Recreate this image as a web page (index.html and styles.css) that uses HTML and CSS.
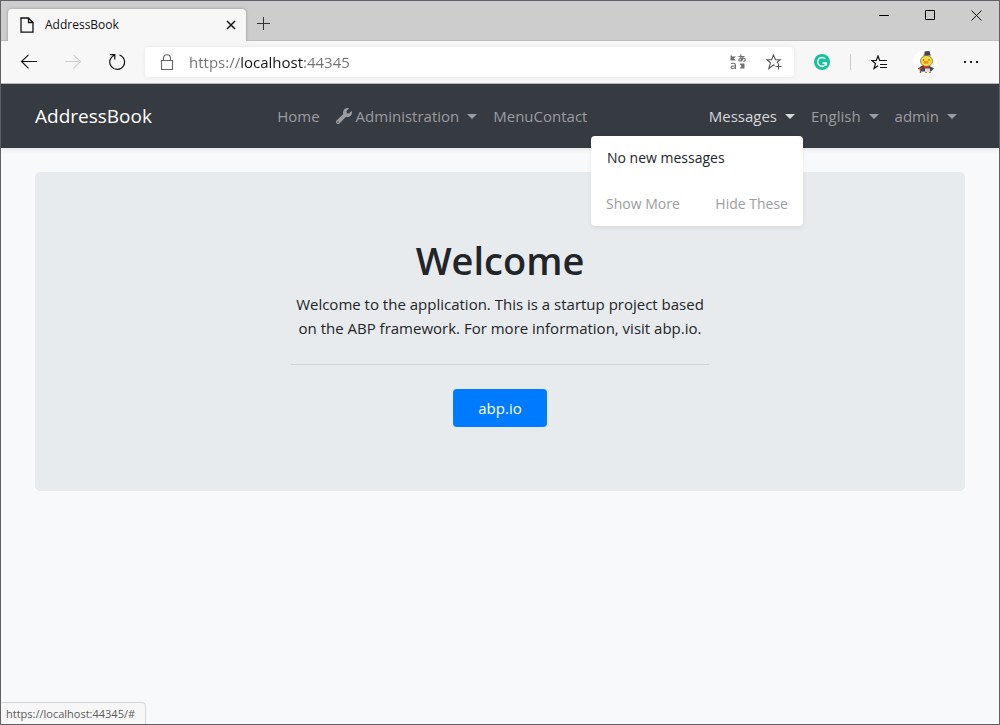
FILE: index.html
```html
<!DOCTYPE html>
<html lang="en">
<head>
<meta charset="utf-8">
<title>AddressBook</title>
<link rel="stylesheet" href="styles.css">
</head>
<body>
<div class="window">
  <div class="titlebar">
    <div class="tab">
      <svg class="tab-file" width="14" height="16" viewBox="0 0 14 16" fill="none" stroke="#111" stroke-width="1.3"><path d="M1 1h7.500L13 5.500V15.200H1zM8.500 1v4.500H13"/></svg>
      <span class="tab-title">AddressBook</span>
      <button class="icon-btn tab-close" aria-label="Close tab"><svg width="10" height="10" viewBox="0 0 10 10" stroke="#111" stroke-width="1.500"><path d="M1 1l8 8M9 1L1 9"/></svg></button>
    </div>
    <button class="icon-btn new-tab" aria-label="New tab"><svg width="14" height="14" viewBox="0 0 14 14" stroke="#333"><path d="M6.500 0v13M0 6.500h13"/></svg></button>
    <div class="window-controls">
      <button class="icon-btn control" aria-label="Minimize"><svg width="11" height="11" viewBox="0 0 11 11" stroke="#000"><path d="M0 5.500h10"/></svg></button>
      <button class="icon-btn control" aria-label="Maximize"><svg width="11" height="11" viewBox="0 0 11 11" stroke="#000" fill="none"><path d="M.5.5h9v9h-9z"/></svg></button>
      <button class="icon-btn control" aria-label="Close window"><svg width="11" height="11" viewBox="0 0 11 11" stroke="#111"><path d="M.5.5l10 10M10.500.5l-10 10"/></svg></button>
    </div>
  </div>

  <div class="toolbar">
    <div class="history">
      <button class="icon-btn" aria-label="Back"><svg width="18" height="16" viewBox="0 0 18 16" fill="none" stroke="#111" stroke-width="1.100"><path d="M17 7.500H1.500M8.500.8L1.500 7.500l7 6.900"/></svg></button>
      <button class="icon-btn" aria-label="Forward" disabled><svg width="18" height="16" viewBox="0 0 18 16" fill="none" stroke="#ccc" stroke-width="1.100"><path d="M1 7.500h15.500M9.500.8l7 6.700-7 6.900"/></svg></button>
      <button class="icon-btn" aria-label="Refresh"><svg width="18" height="18" viewBox="0 0 18 18" fill="none" stroke="#111" stroke-width="1.200"><path d="M11.500 2a7.400 7.400 0 1 1-5.200.2M2 1.600h4.800v4.800"/></svg></button>
    </div>
    <div class="address">
      <svg width="14" height="17" viewBox="0 0 14 17" fill="none" stroke="#666" stroke-width="1.100"><path d="M1.500 6.500h11v9h-11zM3.500 6.500V4.200a3.400 3.400 0 0 1 7 0v2.300"/></svg>
      <input class="url" type="text" aria-label="Address" value="https://localhost:44345">
      <button class="icon-btn" aria-label="Translate"><svg width="16" height="16" viewBox="0 0 16 16" fill="none" stroke="#707070" stroke-width="1.100"><path d="M.5 1.500h1.500v1H6L4 4.500l2 2H.5zM9.500 14.500h5v-5h-5l2 2.500z" fill="#707070" stroke="none"/><path d="M8.500 2.500h6M10.800.2c-.3 3 0 4.500.7 6.300M13.300 3.500c-.5 2-2 3.500-3.500 3.500s-1.500-2.300 1-2.800 4.500.2 4.500 1.500-1 1.700-2 1.800M1 10c1-1.200 4.500-1.200 4.500 1V15M5.500 12C3 11.800 1 12 1 13.400c0 1.700 3.500 1.500 4.500-.4"/></svg></button>
      <button class="icon-btn" aria-label="Add to favorites"><svg width="16" height="16" viewBox="0 0 16 16" fill="none" stroke="#555" stroke-width="1.100"><path d="M8.500 11.800L7.500 11l-4.700 3.500 1.700-5.700L.8 5.700h4.800L7.500 1l2 4.700h4.700l-3 2.400.3 1.200M12.500 9.500v6M9.500 12.500h6"/></svg></button>
    </div>
    <div class="extensions">
      <button class="icon-btn" aria-label="Writing assistant"><svg width="16" height="16" viewBox="0 0 16 16"><circle cx="8" cy="8" r="8" fill="#15c39a"/><path d="M11.200 4.800A4.400 4.400 0 1 0 12.300 9H8.500M12.300 9v2.500" fill="none" stroke="#fff" stroke-width="1.400"/></svg></button>
      <span class="divider"></span>
      <button class="icon-btn" aria-label="Favorites"><svg width="16" height="15" viewBox="0 0 16 15" fill="none" stroke="#111" stroke-width="1.200"><path d="M7 10.800L3 13.500l1.500-5L.8 5.500h4.500L7 1l1.700 4.500H16M9 9.500h7M9 12.500h7"/></svg></button>
      <button class="icon-btn" aria-label="Profile"><svg width="24" height="24" viewBox="0 0 24 24"><circle cx="12" cy="12" r="12" fill="#fff"/><path d="M6.500 17q6-4 12 0l2.500 1.500-3 3H7z" fill="#47464d"/><ellipse cx="13.500" cy="11" rx="6" ry="5.500" fill="#f4dc3b" stroke="#6b6040" stroke-width=".7"/><path d="M11.500 1.500q3-1.200 5.500 0V5h-5.500zM10.500 4.500h7.500v1h-7.500z" fill="#45454b"/><ellipse cx="13" cy="12.300" rx="2.600" ry="1.500" fill="#ee8b22"/><circle cx="10.500" cy="10" r=".7" fill="#554"/><circle cx="16" cy="10" r=".7" fill="#554"/><path d="M10.500 15.500l2.500 1.200 2.500-1.200v3L13 17.500l-2.500 1z" fill="#e52836"/><path d="M12 18.500h5V22h-5z" fill="#dedee2"/><path d="M5 18.500h4M7.500 18.500V23" stroke="#9b562d" stroke-width="1.400"/><path d="M12 22.500h2m2 0h2" stroke="#d58a37"/></svg></button>
      <button class="icon-btn" aria-label="Settings and more"><svg width="16" height="4" viewBox="0 0 16 4" fill="#222"><path d="M1 1h2v2H1zM7 1h2v2H7zM13 1h2v2h-2z"/></svg></button>
    </div>
  </div>

  <div class="page">
    <nav class="navbar">
      <a class="brand" href="#">AddressBook</a>
      <ul class="menu">
        <li><a class="nav-link" href="#">Home</a></li>
        <li><a class="nav-link caret" href="#"><svg class="wrench" width="16" height="16" viewBox="0 0 512 512" fill="currentColor"><path d="M507.700 109.100c-2.200-9-13.500-12.100-20.100-5.500l-74.400 74.400-67.900-11.300L334 98.900l74.400-74.400c6.600-6.600 3.400-17.900-5.700-20.200-47.400-11.700-99.600.9-136.600 37.900-39.600 39.600-50.500 97.100-34.100 147.200L18.700 402.800c-25 25-25 65.500 0 90.500s65.500 25 90.500 0l213.200-213.200c50.100 16.700 107.500 5.700 147.400-34.200 37.100-37.100 49.700-89.300 37.900-136.800zM64 472c-13.200 0-24-10.800-24-24 0-13.300 10.700-24 24-24s24 10.700 24 24c0 13.200-10.700 24-24 24z"/></svg>Administration</a></li>
        <li><a class="nav-link" href="#">MenuContact</a></li>
      </ul>
      <ul class="menu">
        <li class="dropdown">
          <a class="nav-link caret active" href="#" aria-expanded="true">Messages</a>
          <div class="dropdown-menu">
            <p class="notice">No new messages</p>
            <div class="actions"><a href="#">Show More</a><a href="#">Hide These</a></div>
          </div>
        </li>
        <li><a class="nav-link caret" href="#">English</a></li>
        <li><a class="nav-link caret" href="#">admin</a></li>
      </ul>
    </nav>
    <main class="container">
      <section class="jumbotron">
        <div class="welcome">
          <h1>Welcome</h1>
          <p>Welcome to the application. This is a startup project based on the ABP framework. For more information, visit abp.io.</p>
          <hr>
          <a class="button" href="#">abp.io</a>
        </div>
      </section>
    </main>
    <div class="status">https://localhost:44345/#</div>
  </div>
</div>
</body>
</html>
```
FILE: styles.css
```css
* { box-sizing: border-box; }
body {
  margin: 0;
  font-family: "Open Sans", "Noto Sans", sans-serif;
  font-size: 15px;
  line-height: 24px;
  color: #212529;
}
a { text-decoration: none; }
svg { display: block; flex: none; }
.window {
  display: flex;
  flex-direction: column;
  min-height: 100vh;
  border: 1px solid #606166;
  background: #f8f9fb;
}
.icon-btn {
  display: flex;
  align-items: center;
  justify-content: center;
  padding: 0;
  border: 0;
  background: none;
}
.titlebar {
  display: flex;
  align-items: flex-end;
  height: 40px;
  padding-left: 7px;
  background: #cdcdcd;
  border-bottom: 1px solid #bdbdbd;
}
.tab {
  display: flex;
  align-items: center;
  width: 238px;
  height: 32px;
  margin-bottom: -1px;
  padding: 0 10px 0 12px;
  border-radius: 4px 4px 0 0;
  background: #f7f7f7;
  box-shadow: 0 0 3px #0000004d;
  clip-path: inset(-4px -4px 0 -4px);
}
.tab-title { flex: 1; margin-left: 11px; font-size: 12px; color: #111; }
.new-tab { width: 36px; height: 32px; }
.window-controls { display: flex; align-self: flex-start; margin-left: auto; }
.control { width: 46px; height: 28px; }
.toolbar {
  display: flex;
  align-items: center;
  height: 43px;
  padding: 0 20px 0 19px;
  background: #f7f7f7;
  border-bottom: 1px solid #b8b8ba;
}
.history { display: flex; gap: 26px; }
.address {
  display: flex;
  flex: 1;
  align-items: center;
  gap: 20px;
  height: 30px;
  margin-left: 19px;
  padding: 0 12px 0 15px;
  border-radius: 4px;
  background: #fff;
  box-shadow: 0 0 4px #00000014;
}
.url {
  flex: 1;
  min-width: 0;
  margin-left: -5px;
  padding: 0;
  border: 0;
  font: 15px/24px "Open Sans", "Noto Sans", sans-serif;
  color: transparent;
  background: linear-gradient(90deg, #717171 51px, #171717 51px, #171717 114px, #717171 114px);
  -webkit-background-clip: text;
  background-clip: text;
}
.extensions { display: flex; align-items: center; margin-left: 20px; }
.divider { width: 1px; height: 16px; margin: 0 20px; background: #c8c8c8; }
.extensions .icon-btn + .icon-btn { margin-left: 26px; }
.page { position: relative; flex: 1; }
.navbar {
  display: flex;
  align-items: center;
  justify-content: space-between;
  padding: 12px 34px;
  background: #363a41;
  box-shadow: 0 2px 4px #00000013;
}
.brand { margin-right: 12px; font-size: 19px; color: #fff; }
.menu { display: flex; margin: 0; padding: 0; list-style: none; }
.nav-link { display: flex; align-items: center; padding: 8px; color: #9b9da0; }
.wrench { margin-right: 4px; }
.caret::after {
  content: "";
  margin-left: 8px;
  border: 5px solid transparent;
  border-top-color: currentColor;
  border-bottom: 0;
}
.nav-link.active { color: #d7d8d9; }
.dropdown { position: relative; }
.dropdown-menu {
  position: absolute;
  top: 100%;
  right: 0;
  width: 212px;
  padding: 10px 15px;
  border-radius: 4px;
  background: #fff;
  box-shadow: 0 2px 4px #00000013;
  font-size: 14px;
}
.notice { margin: 0 1px 22px; }
.actions { display: flex; justify-content: space-between; }
.actions a { color: #9b9da0; }
.container { padding: 24px 34px; }
.jumbotron {
  padding: 64px 32px;
  border-radius: 5px;
  background: #e8ebee;
  text-align: center;
}
.welcome { max-width: 418px; margin: 0 auto; }
.welcome h1 { margin: 0 0 8px; font-size: 38px; line-height: 48px; font-weight: 600; }
.welcome p { margin: 0; }
.welcome hr { margin: 24px 0; border: 0; border-top: 1px solid #cdd1d4; }
.button {
  display: inline-block;
  vertical-align: top;
  padding: 7px 25px;
  border-radius: 4px;
  background: #007bff;
  color: #fff;
}
.status {
  position: absolute;
  left: 0;
  bottom: 0;
  padding: 0 10px 0 5px;
  border: 1px solid #d4d6d8;
  border-width: 1px 1px 0 0;
  border-radius: 0 4px 0 0;
  background: #f7f7f7;
  color: #5c5c5c;
  font-size: 11px;
  line-height: 21px;
}
```
